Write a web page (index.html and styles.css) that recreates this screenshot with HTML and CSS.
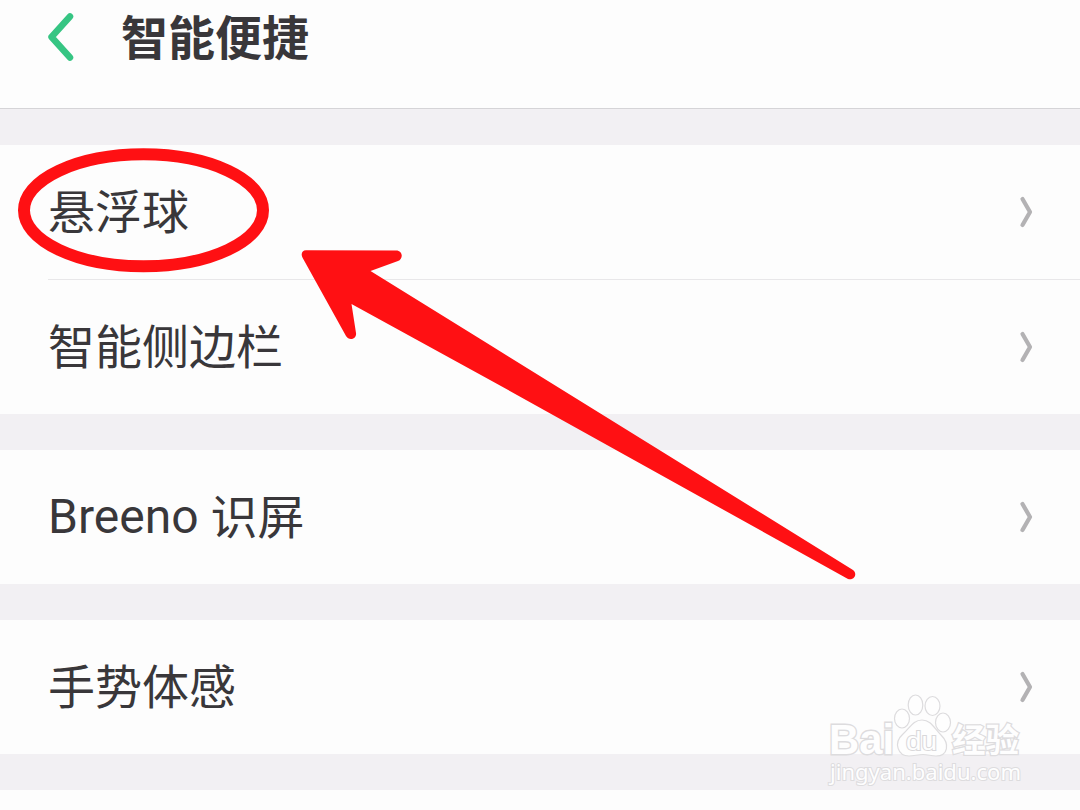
FILE: index.html
```html
<!DOCTYPE html>
<html lang="zh-CN">
<head>
<meta charset="utf-8">
<title>智能便捷</title>
<link rel="stylesheet" href="styles.css">
</head>
<body>
<div class="screen">
  <header class="header">
    <svg class="back" viewBox="0 0 28 50"><path d="M23 4.500 4.500 25 23 45.500"/></svg>
    <h1 class="title">智能便捷</h1>
  </header>
  <main class="settings">
    <section class="group">
      <div class="row"><span class="label">悬浮球</span><svg class="chevron" viewBox="0 0 14 32"><path d="M3.500 3 11 16 3.500 29"/></svg></div>
      <div class="row divided"><span class="label">智能侧边栏</span><svg class="chevron" viewBox="0 0 14 32"><path d="M3.500 3 11 16 3.500 29"/></svg></div>
    </section>
    <section class="group">
      <div class="row"><span class="label"><span class="latin">Breeno </span>识屏</span><svg class="chevron" viewBox="0 0 14 32"><path d="M3.500 3 11 16 3.500 29"/></svg></div>
    </section>
    <section class="group">
      <div class="row"><span class="label">手势体感</span><svg class="chevron" viewBox="0 0 14 32"><path d="M3.500 3 11 16 3.500 29"/></svg></div>
    </section>
    <section class="group"><div class="row"></div></section>
  </main>
  <svg class="overlay" viewBox="0 0 1080 810">
    <g class="watermark">
      <text class="brand" x="829" y="753.500" textLength="65" lengthAdjust="spacingAndGlyphs">Bai</text>
      <ellipse cx="902" cy="718.500" rx="7.500" ry="9.500"/>
      <ellipse cx="915.500" cy="705" rx="7.300" ry="10"/>
      <ellipse cx="932.500" cy="706" rx="7.500" ry="9.500"/>
      <ellipse cx="943" cy="722.500" rx="7.500" ry="9.500"/>
      <path d="M922 720C913 720 910 728 903 734C893 743 898 756 909 756C914 756 918 754.500 923 754.500C928 754.500 931 756 936 756C948 756 950 744 941 735C934 728 931 720 922 720Z"/>
      <text class="du" x="906" y="749.500" textLength="31" lengthAdjust="spacingAndGlyphs">du</text>
      <text class="experience" x="952" y="751.500" textLength="67" lengthAdjust="spacingAndGlyphs">经验</text>
      <text class="site" x="830" y="780" textLength="191" lengthAdjust="spacingAndGlyphs">jingyan.baidu.com</text>
    </g>
    <ellipse class="ring" cx="143.500" cy="210.300" rx="119.500" ry="56"/>
    <path class="arrow" d="M306 250.200 396 250.500C403 250.500 403.500 259 398 261L370.500 271 490 345 853 570C858 574 854 581 848 579L490 380 351.500 304 356 333C357 339 349 341.500 346 336L302.700 258C300.500 254 302 250.200 306 250.200Z"/>
  </svg>
</div>
</body>
</html>
```
FILE: styles.css
```css
* { box-sizing: border-box; }
body {
  margin: 0;
  background: #f2f0f3;
  color: #39373a;
  font-family: Roboto, "Noto Sans CJK SC", sans-serif;
}
.screen {
  position: relative;
  width: 1080px;
  height: 810px;
  overflow: hidden;
}
.header {
  display: flex;
  align-items: flex-start;
  gap: 46px;
  height: 109px;
  padding: 4px 47px 0;
  background: #fdfdfd;
  border-bottom: 1px solid #d5d4d7;
}
.back {
  width: 28px;
  height: 50px;
  margin-top: 8px;
  fill: none;
  stroke: #36c583;
  stroke-width: 6.500px;
  stroke-linecap: round;
  stroke-linejoin: round;
}
.title {
  margin: 0;
  font-size: 47px;
  line-height: 70px;
  font-weight: 700;
}
.settings {
  display: flex;
  flex-direction: column;
  gap: 36px;
  padding-top: 36px;
}
.group { background: #fdfdfd; }
.row {
  display: flex;
  align-items: center;
  justify-content: space-between;
  height: 134px;
  padding-right: 47px;
  margin-left: 48px;
}
.divided {
  height: 135px;
  border-top: 1px solid #e8e7e9;
}
.label {
  padding-top: 2px;
  font-size: 47px;
  line-height: 70px;
}
.latin {
  font-size: 48px;
  line-height: 1;
  vertical-align: 1px;
}
.chevron {
  width: 14px;
  height: 32px;
  fill: none;
  stroke: #b3b2b4;
  stroke-width: 4.200px;
  stroke-linecap: round;
  stroke-linejoin: round;
}
.overlay {
  position: absolute;
  inset: 0;
  width: 1080px;
  height: 810px;
}
.ring {
  fill: none;
  stroke: #ff1013;
  stroke-width: 12px;
}
.arrow { fill: #ff1013; }
.watermark {
  fill: #fefefe;
  stroke: #dddcde;
  stroke-width: 1.200px;
}
.watermark text { paint-order: stroke; }
.brand {
  font: 700 43px "Liberation Sans", sans-serif;
  stroke-width: 2.800px;
}
.du {
  font: 400 26px "Liberation Sans", sans-serif;
  stroke: #d9d8da;
  stroke-width: 2px;
}
.experience {
  font: 700 33px "Noto Sans CJK SC", sans-serif;
  stroke-width: 2.500px;
}
.site {
  font: 400 22px "Noto Sans", sans-serif;
  stroke-width: 2px;
}
```
